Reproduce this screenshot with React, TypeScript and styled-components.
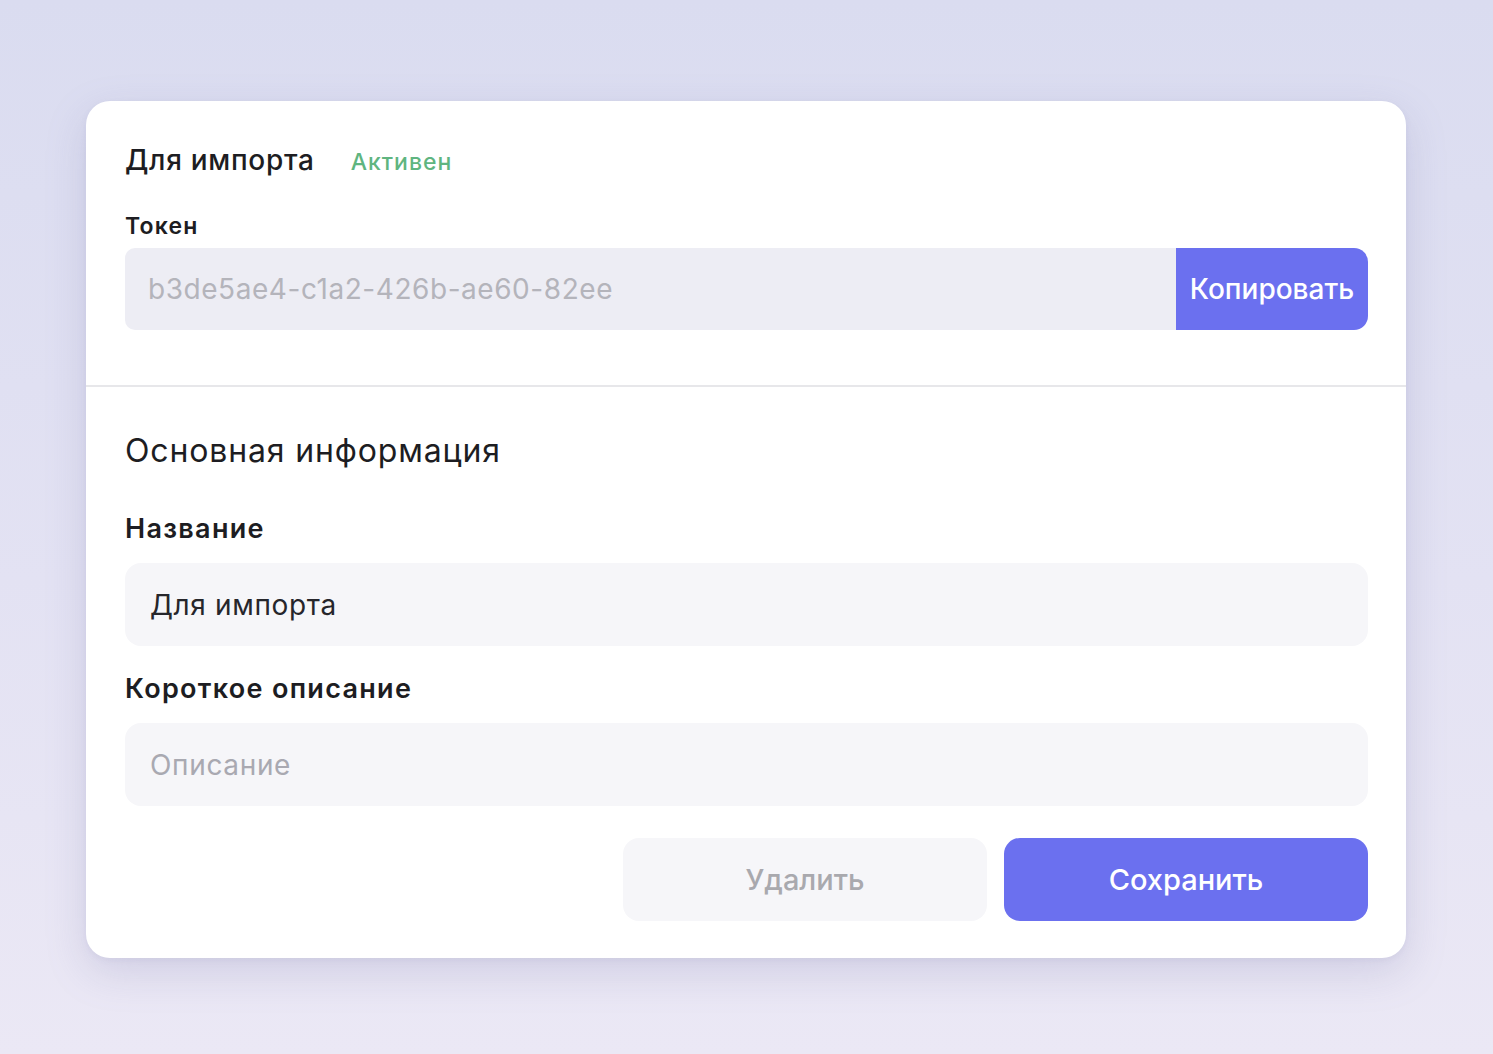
import styled, { createGlobalStyle } from 'styled-components';

const GlobalStyle = createGlobalStyle`
  html, body {
    margin: 0;
    padding: 0;
  }
  body {
    min-height: 100vh;
    background: linear-gradient(180deg, #dadcf0 0%, #e3e2f3 55%, #ebe8f5 100%);
    font-family: Inter, 'Noto Sans', 'Liberation Sans', sans-serif;
    color: #1d1d22;
  }
`;

export default function App() {
  return (
    <>
      <GlobalStyle />
      <Page>
        <Card>
          <TokenSection>
            <TitleRow>
              <Title>Для импорта</Title>
              <Status>Активен</Status>
            </TitleRow>
            <Field>
              <SmallLabel>Токен</SmallLabel>
              <TokenRow>
                <TokenValue>b3de5ae4-c1a2-426b-ae60-82ee</TokenValue>
                <CopyButton>Копировать</CopyButton>
              </TokenRow>
            </Field>
          </TokenSection>
          <InfoSection>
            <SectionTitle>Основная информация</SectionTitle>
            <Fields>
              <Field $gap={18}>
                <Label>Название</Label>
                <Input defaultValue="Для импорта" />
              </Field>
              <Field $gap={18}>
                <Label>Короткое описание</Label>
                <Input placeholder="Описание" />
              </Field>
            </Fields>
            <Actions>
              <Button $variant="ghost">Удалить</Button>
              <Button $variant="primary">Сохранить</Button>
            </Actions>
          </InfoSection>
        </Card>
      </Page>
    </>
  );
}

const Page = styled.div`
  display: flex;
  padding: 101px 0 96px 86px;
`;

const Card = styled.div`
  width: 1320px;
  background: #ffffff;
  border-radius: 24px;
  box-shadow: 0 14px 40px rgba(120, 118, 170, 0.22), 0 2px 6px rgba(120, 118, 170, 0.08);
  overflow: hidden;
`;

const TokenSection = styled.section`
  display: flex;
  flex-direction: column;
  gap: 36px;
  padding: 42px 38px 55px 39px;
  border-bottom: 2px solid #e7e7ea;
`;

const TitleRow = styled.div`
  display: flex;
  align-items: baseline;
  gap: 36px;
`;

const Title = styled.h2`
  margin: 0;
  font-size: 28px;
  line-height: 34px;
  font-weight: 500;
  letter-spacing: 0.7px;
  color: #1d1d22;
`;

const Status = styled.span`
  font-size: 23px;
  font-weight: 500;
  letter-spacing: 1px;
  color: #5fb580;
`;

const Field = styled.div<{ $gap?: number }>`
  display: flex;
  flex-direction: column;
  gap: ${(p) => p.$gap ?? 9}px;
`;

const SmallLabel = styled.label`
  font-size: 23px;
  line-height: 26px;
  font-weight: 600;
  letter-spacing: 1.2px;
  color: #1d1d22;
`;

const TokenRow = styled.div`
  display: flex;
  height: 82px;
`;

const TokenValue = styled.div`
  flex: 1;
  display: flex;
  align-items: center;
  padding: 0 23px;
  background: #ededf4;
  border-radius: 10px 0 0 10px;
  font-size: 28px;
  letter-spacing: 0.55px;
  color: #b4b4bb;
`;

const CopyButton = styled.button`
  width: 192px;
  border: none;
  border-radius: 0 14px 14px 0;
  background: #6b70ef;
  color: #ffffff;
  font-family: inherit;
  font-size: 28px;
  font-weight: 500;
  cursor: pointer;
`;

const InfoSection = styled.section`
  display: flex;
  flex-direction: column;
  padding: 45px 38px 37px 39px;
`;

const SectionTitle = styled.h3`
  margin: 0 0 43px;
  font-size: 32px;
  line-height: 38px;
  font-weight: 400;
  letter-spacing: 0.85px;
  color: #1d1d22;
`;

const Fields = styled.div`
  display: flex;
  flex-direction: column;
  gap: 27px;
`;

const Label = styled.label`
  font-size: 27px;
  line-height: 32px;
  font-weight: 600;
  letter-spacing: 1.3px;
  color: #1d1d22;
`;

const Input = styled.input`
  height: 83px;
  box-sizing: border-box;
  padding: 0 25px;
  border: none;
  outline: none;
  border-radius: 16px;
  background: #f6f6f9;
  font-family: inherit;
  font-size: 28px;
  letter-spacing: 0.65px;
  color: #26262b;

  &::placeholder {
    color: #a9a9b1;
  }
`;

const Actions = styled.div`
  display: flex;
  justify-content: flex-end;
  gap: 17px;
  margin-top: 32px;
`;

const Button = styled.button<{ $variant: 'ghost' | 'primary' }>`
  width: 364px;
  height: 83px;
  border: none;
  border-radius: 16px;
  font-family: inherit;
  font-size: 29px;
  font-weight: 500;
  cursor: pointer;
  background: ${(p) => (p.$variant === 'primary' ? '#6b70ef' : '#f6f6f9')};
  color: ${(p) => (p.$variant === 'primary' ? '#ffffff' : '#a9a9ae')};
`;
